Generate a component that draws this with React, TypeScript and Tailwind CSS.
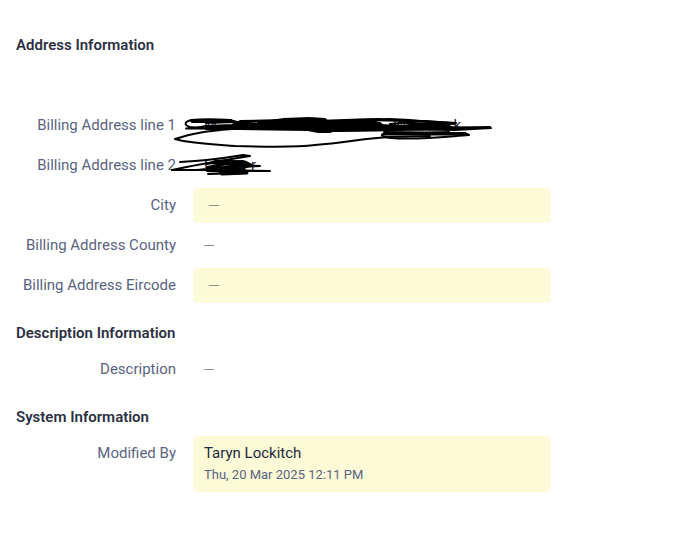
import type { ReactNode } from 'react'
import { clsx } from 'clsx'

function Section({ title, spaced, children }: { title: string; spaced?: boolean; children: ReactNode }) {
  return (
    <section className="mb-5">
      <h2 className="text-[15px] leading-5 font-semibold text-[#2b3042]">{title}</h2>
      <dl className={clsx('flex flex-col gap-[5px]', spaced ? 'mt-[53px]' : 'mt-[9px]')}>{children}</dl>
    </section>
  )
}

function Field({ label, highlight, children }: { label: string; highlight?: boolean; children?: ReactNode }) {
  return (
    <div className="flex gap-[17px]">
      <dt className="w-40 shrink-0 py-[7px] text-right text-[15px] leading-5 whitespace-nowrap text-[#596380]">
        {label}
      </dt>
      <dd
        className={clsx(
          'relative min-h-[35px] max-w-[358px] flex-1 rounded-[5px] py-[7px] text-[15px] leading-5 text-[#24293a]',
          highlight && 'bg-[#fdfad8]',
          highlight && !children ? 'px-4' : 'px-[11px]'
        )}
      >
        {children || (
          <span className="block font-['Liberation_Sans',sans-serif] text-[10px] leading-5 text-[#777]">—</span>
        )}
      </dd>
    </div>
  )
}

function LongScribble() {
  return (
    <svg
      className="absolute top-0 -left-[23px] h-[48px] w-[325px]"
      viewBox="170 108 325 48"
      fill="none"
      stroke="#000"
      strokeWidth="2"
      strokeLinecap="round"
      strokeLinejoin="round"
      aria-hidden="true"
    >
      <path d="M231 120C217 119 200 119 191 120C184 122 184 125 190 127C196 128 202 127 206 126L240 128L186 128.500L300 129" />
      <path d="M191 121L230 120L237 122L270 121L284 119L309 118L325 119L328 122L350 120L390 119L410 120L454 124" />
      <path d="M232 129C208 131 192 133 175 139C187 143 208 144 235 146C270 147 300 147 315 145C345 143 365 138 390 137L430 136" />
      <path
        d="M206 126L232 125L238 122L258 124L290 120L322 119L327 122L345 121L365 120L380 123L384 127L372 130L332 131L330 132L318 132L308 130L240 129L206 129Z"
        fill="#000"
      />
      <path d="M192 122L235 122L206 123M240 121L285 120M258 123L345 120L381 119L330 122" />
      <path d="M365 120C398 120 420 122 453 123L424 121L390 124M380 125L440 128L490 127C460 129 410 130 334 131" />
      <path d="M366 129L400 126L456 123L420 121L404 123L452 127L391 129L455 130L491 128L418 127L370 130" />
      <path d="M384 132L465 133L469 135C442 137 417 140 391 138C375 136 381 132 400 133L466 134L386 134L449 132" />
      <path d="M384 134L456 134M415 124L449 125L409 127L453 129M372 127L400 127" strokeWidth="3" />
    </svg>
  )
}

function ShortScribble() {
  return (
    <svg
      className="absolute top-0 -left-[23px] h-[32px] w-[104px]"
      viewBox="170 148 104 32"
      fill="none"
      stroke="#000"
      strokeWidth="2"
      strokeLinecap="round"
      strokeLinejoin="round"
      aria-hidden="true"
    >
      <path d="M180 162C203 161 225 158 243 155L250 156C225 160 194 165 172 170L212 170L270 171L207 171L247 173L208 174" />
      <path d="M172 170L197 170L235 166L260 166L207 168L243 161L209 163L230 160M206 163L260 166" />
      <path d="M215 161L245 162L251 165L242 168L247 173L222 174L219 170L208 168M217 163L238 165M220 168L240 169" strokeWidth="3" />
      <path d="M207 164L218 161L233 162L231 164L246 163L243 166L225 167L239 170L226 172L242 173M207 167L218 165" />
    </svg>
  )
}

export default function App() {
  return (
    <main className="min-h-screen bg-white px-4 pt-[35px] font-['Roboto',sans-serif]">
      <Section title="Address Information" spaced>
        <Field label="Billing Address line 1">
          <span className="flex w-[257px] justify-between">
            <span>M</span>
            <span className="flex w-[68px] justify-between">
              <span>W</span>
              <span>k</span>
            </span>
          </span>
          <LongScribble />
        </Field>
        <Field label="Billing Address line 2">
          <span className="flex w-[52px] justify-between">
            <span>L</span>
            <span>r</span>
          </span>
          <ShortScribble />
        </Field>
        <Field label="City" highlight />
        <Field label="Billing Address County" />
        <Field label="Billing Address Eircode" highlight />
      </Section>

      <Section title="Description Information">
        <Field label="Description" />
      </Section>

      <Section title="System Information">
        <Field label="Modified By" highlight>
          <p>Taryn Lockitch</p>
          <p className="mt-[2px] text-[13px] leading-5 text-[#596380]">Thu, 20 Mar 2025 12:11 PM</p>
        </Field>
      </Section>
    </main>
  )
}
